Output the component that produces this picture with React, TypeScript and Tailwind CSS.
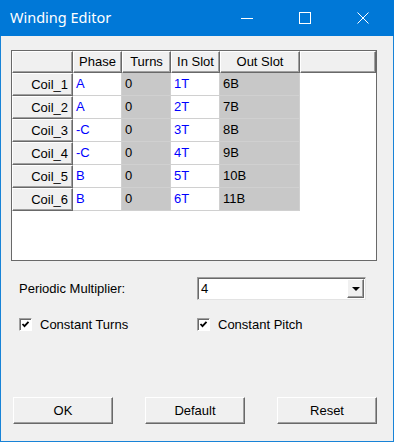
import React from "react";

const rows = [
  { name: "Coil_1", phase: "A", turns: "0", inSlot: "1T", outSlot: "6B" },
  { name: "Coil_2", phase: "A", turns: "0", inSlot: "2T", outSlot: "7B" },
  { name: "Coil_3", phase: "-C", turns: "0", inSlot: "3T", outSlot: "8B" },
  { name: "Coil_4", phase: "-C", turns: "0", inSlot: "4T", outSlot: "9B" },
  { name: "Coil_5", phase: "B", turns: "0", inSlot: "5T", outSlot: "10B" },
  { name: "Coil_6", phase: "B", turns: "0", inSlot: "6T", outSlot: "11B" },
];

const raised =
  "bg-[#f0f0f0] border-t border-l border-t-white border-l-white border-r border-b border-r-[#696969] border-b-[#696969] shadow-[inset_-1px_-1px_0_#a0a0a0]";

const cell = "border-r border-b border-[#d0d0d0] pl-[3px] flex items-center";

const Check = () => (
  <div className="w-[13px] h-[13px] bg-white border border-t-[#a0a0a0] border-l-[#a0a0a0] border-r-white border-b-white shadow-[inset_1px_1px_0_#696969] flex items-center justify-center">
    <svg width="9" height="9" viewBox="0 0 9 9">
      <polyline points="1.5,4 3.5,6.2 7.5,1.8" fill="none" stroke="#000" strokeWidth="1.8" />
    </svg>
  </div>
);

const Btn = ({ label }: { label: string }) => (
  <div className={`${raised} w-[100px] h-[27px] flex items-center justify-center text-[13px] text-black`}>
    {label}
  </div>
);

export default function App() {
  return (
    <div
      className="w-[394px] h-[442px] bg-[#1883d7] flex flex-col px-[1px] pb-[1px] overflow-hidden"
      style={{ fontFamily: '"Liberation Sans", Arial, sans-serif' }}
    >
      {/* title bar */}
      <div className="h-[36px] bg-[#0078d7] -mx-[1px] flex items-center text-white">
        <div className="pl-[10px] text-[14.5px] flex-1" style={{ fontFamily: '"Noto Sans", sans-serif' }}>
          Winding Editor
        </div>
        <div className="flex items-center h-full mr-[2px]">
          <div className="w-[58px] h-full flex items-center justify-center">
            <svg width="12" height="12" viewBox="0 0 12 12">
              <line x1="0" y1="6.5" x2="12" y2="6.5" stroke="#fff" strokeWidth="1" />
            </svg>
          </div>
          <div className="w-[58px] h-full flex items-center justify-center">
            <svg width="12" height="12" viewBox="0 0 12 12">
              <rect x="0.5" y="0.5" width="11" height="11" fill="none" stroke="#fff" strokeWidth="1" />
            </svg>
          </div>
          <div className="w-[58px] h-full flex items-center justify-center">
            <svg width="12" height="12" viewBox="0 0 12 12">
              <path d="M0.5 0.5 L11.5 11.5 M11.5 0.5 L0.5 11.5" stroke="#fff" strokeWidth="1" />
            </svg>
          </div>
        </div>
      </div>

      {/* body */}
      <div className="flex-1 bg-[#f0f0f0] flex flex-col text-[13px] text-black">
        <div className="mt-[14px] ml-[10px] w-[366px] h-[211px] border border-[#696969] bg-white">
          <div className="grid grid-cols-[61px_49px_49px_49px_80px_76px] grid-rows-[22px_repeat(6,23px)]">
            <div className={raised} />
            <div className={`${raised} flex items-center justify-center`}>Phase</div>
            <div className={`${raised} flex items-center justify-center`}>Turns</div>
            <div className={`${raised} flex items-center justify-center`}>In Slot</div>
            <div className={`${raised} flex items-center justify-center`}>Out Slot</div>
            <div className={raised} />
            {rows.map((r) => (
              <React.Fragment key={r.name}>
                <div className={`${raised} flex items-center justify-end pr-[4px]`}>{r.name}</div>
                <div className={`${cell} text-[#0000ff]`}>{r.phase}</div>
                <div className={`${cell} bg-[#c8c8c8]`}>{r.turns}</div>
                <div className={`${cell} text-[#0000ff]`}>{r.inSlot}</div>
                <div className={`${cell} bg-[#c8c8c8]`}>{r.outSlot}</div>
                <div />
              </React.Fragment>
            ))}
          </div>
        </div>

        <div className="mt-[16px] flex items-center h-[23px]">
          <div className="ml-[18px] w-[178px]">Periodic Multiplier:</div>
          <div className="w-[169px] h-[23px] bg-white border border-t-[#a0a0a0] border-l-[#a0a0a0] border-r-[#e3e3e3] border-b-[#e3e3e3] shadow-[inset_1px_1px_0_#696969] flex items-center">
            <div className="flex-1 pl-[3px]">4</div>
            <div className={`${raised} w-[17px] h-[19px] mr-[1px] flex items-center justify-center`}>
              <svg width="8" height="4" viewBox="0 0 8 4">
                <polygon points="0,0 8,0 4,4" fill="#000" />
              </svg>
            </div>
          </div>
        </div>

        <div className="mt-[16px] flex items-center h-[17px]">
          <div className="ml-[18px] w-[178px] flex items-center gap-[8px]">
            <Check />
            <span>Constant Turns</span>
          </div>
          <div className="flex items-center gap-[8px]">
            <Check />
            <span>Constant Pitch</span>
          </div>
        </div>

        <div className="mt-auto mb-[17px] ml-[12px] flex gap-[32px]">
          <Btn label="OK" />
          <Btn label="Default" />
          <Btn label="Reset" />
        </div>
      </div>
    </div>
  );
}
